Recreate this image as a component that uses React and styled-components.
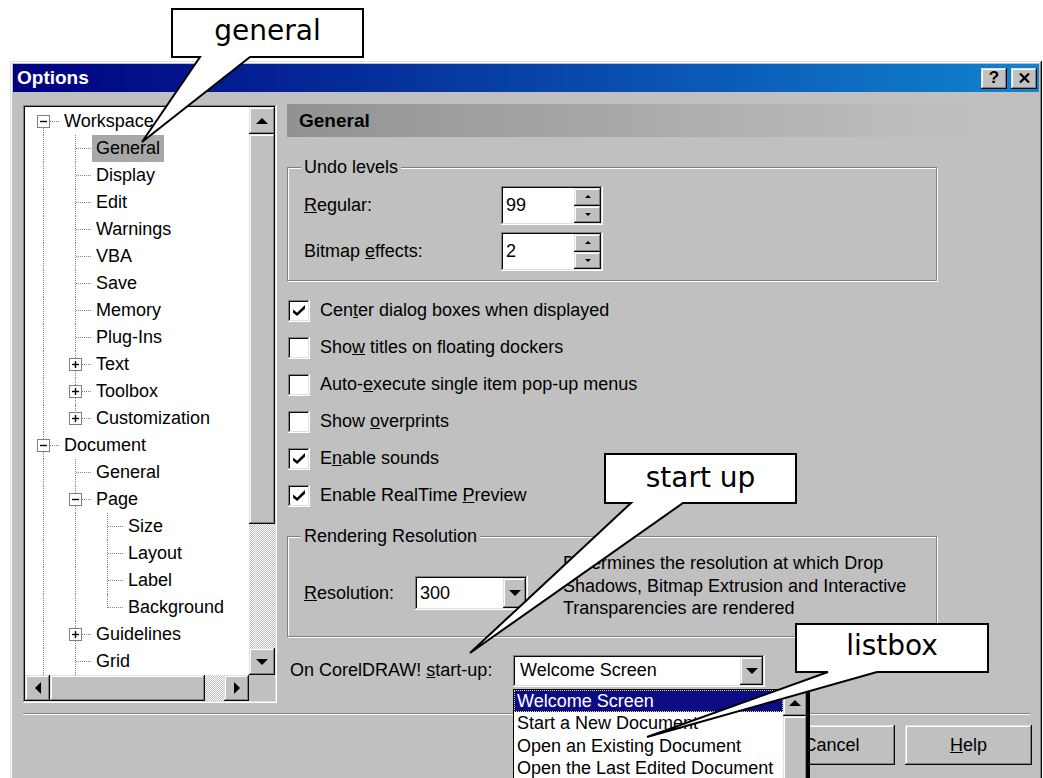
import React from 'react';
import styled, { createGlobalStyle, css } from 'styled-components';

const GlobalStyle = createGlobalStyle`
  html, body { margin: 0; padding: 0; background: #fff; overflow: hidden; }
  body { font-family: "Liberation Sans", Arial, sans-serif; }
`;

const raised = css`
  background: #c0c0c0;
  box-shadow: inset -1px -1px #0a0a0a, inset 1px 1px #dfdfdf,
    inset -2px -2px #808080, inset 2px 2px #fff;
`;

const sunken = css`
  box-shadow: inset -1px -1px #fff, inset 1px 1px #808080,
    inset -2px -2px #dfdfdf, inset 2px 2px #0a0a0a;
`;

const dither = css`
  background-color: #fff;
  background-image: repeating-conic-gradient(#c0c0c0 0 25%, #fff 0 50%);
  background-size: 2px 2px;
`;

const Page = styled.div`
  position: relative;
  width: 1043px;
  height: 778px;
  overflow: hidden;
  background: #fff;
  box-sizing: border-box;
  padding: 61px 0 0 10px;
  font-family: "Liberation Sans", Arial, sans-serif;
  font-size: 18px;
  color: #000;
`;

const Window = styled.div`
  width: 1032px;
  box-sizing: border-box;
  padding: 3px 3px 40px;
  ${raised};
`;

const TitleBar = styled.div`
  display: flex;
  align-items: center;
  height: 28px;
  padding: 0 2px 0 4px;
  background: linear-gradient(90deg, #000080, #1084d0);
  color: #fff;
`;

const TitleText = styled.span`
  font-weight: bold;
  font-size: 19px;
`;

const TitleButtons = styled.div`
  margin-left: auto;
  display: flex;
  gap: 4px;
`;

const TitleButton = styled.div`
  width: 26px;
  height: 21px;
  display: flex;
  align-items: center;
  justify-content: center;
  color: #000;
  font-weight: bold;
  font-size: 17px;
  ${raised};
`;

const Body = styled.div`
  display: grid;
  grid-template-columns: 254px 736px;
  column-gap: 10px;
  align-items: start;
  padding: 13px 0 0 10px;
`;

/* ---------- tree view ---------- */

const TreeBox = styled.div`
  height: 598px;
  box-sizing: border-box;
  padding: 2px;
  background: #fff;
  ${sunken};
  display: grid;
  grid-template-columns: 1fr 26px;
  grid-template-rows: 1fr 26px;
`;

const TreeViewport = styled.div`
  overflow: hidden;
  background: #fff;
  padding: 1px 0 0 2px;
`;

const TreeRow = styled.div`
  display: flex;
  height: 27px;
  white-space: nowrap;
`;

const Guide = styled.div`
  position: relative;
  flex: none;
  width: 32px;
  &::before {
    content: '';
    display: ${(p) => (p.$line ? 'block' : 'none')};
    position: absolute;
    left: 16px;
    top: 0;
    bottom: 0;
    border-left: 1px dotted #808080;
  }
`;

const Joint = styled.div`
  position: relative;
  flex: none;
  width: 32px;
  &::before {
    content: '';
    position: absolute;
    left: 16px;
    top: ${(p) => (p.$first ? '50%' : '0')};
    bottom: ${(p) => (p.$last ? '50%' : '0')};
    border-left: 1px dotted #808080;
  }
  &::after {
    content: '';
    position: absolute;
    left: 17px;
    right: 0;
    top: 13px;
    border-top: 1px dotted #808080;
  }
`;

const ExpanderBox = styled.svg`
  position: absolute;
  left: 10px;
  top: 7px;
  z-index: 1;
`;

const NodeLabel = styled.span`
  margin-left: 1px;
  padding: 0 4px;
  line-height: 27px;
  height: 27px;
  background: ${(p) => (p.$selected ? '#a8a8a8' : 'transparent')};
`;

const ScrollColumn = styled.div`
  display: flex;
  flex-direction: column;
  ${dither};
`;

const ScrollLine = styled.div`
  display: flex;
  ${dither};
`;

const ScrollButton = styled.div`
  flex: none;
  width: ${(p) => p.$w || 'auto'};
  height: ${(p) => p.$h || 'auto'};
  display: flex;
  align-items: center;
  justify-content: center;
  ${raised};
`;

const ScrollThumb = styled.div`
  flex: none;
  ${(p) => (p.$vertical ? `height: ${p.$size}px;` : `width: ${p.$size}px;`)}
  ${raised};
`;

const ScrollTrack = styled.div`
  flex: 1;
`;

const ScrollCorner = styled.div`
  background: #c0c0c0;
`;

const Triangle = styled.span`
  width: 0;
  height: 0;
  border: ${(p) => p.$s}px solid transparent;
  ${(p) =>
    p.$dir === 'up' &&
    css`
      border-top-width: 0;
      border-bottom-color: #000;
    `}
  ${(p) =>
    p.$dir === 'down' &&
    css`
      border-bottom-width: 0;
      border-top-color: #000;
    `}
  ${(p) =>
    p.$dir === 'left' &&
    css`
      border-left-width: 0;
      border-right-color: #000;
    `}
  ${(p) =>
    p.$dir === 'right' &&
    css`
      border-right-width: 0;
      border-left-color: #000;
    `}
`;

/* ---------- right panel ---------- */

const Panel = styled.div`
  display: flex;
  flex-direction: column;
  margin-top: -1px;
`;

const PanelHeader = styled.div`
  height: 33px;
  display: flex;
  align-items: center;
  padding-left: 12px;
  font-weight: bold;
  font-size: 19px;
  background: linear-gradient(90deg, #929292, #bdbdbd 85%, #c0c0c0);
`;

const Group = styled.fieldset`
  width: 650px;
  min-width: 0;
  box-sizing: border-box;
  margin: ${(p) => p.$mt}px 0 0;
  padding: ${(p) => p.$pt}px 16px ${(p) => p.$pb}px;
  border: 1px solid #808080;
  box-shadow: 1px 1px 0 #fff, inset 1px 1px 0 #fff;
`;

const Legend = styled.legend`
  margin-left: -3px;
  padding: 0 3px;
  line-height: 21px;
  background: #c0c0c0;
`;

const UndoGrid = styled.div`
  display: grid;
  grid-template-columns: 197px 102px;
  row-gap: 7px;
  align-items: center;
`;

const Key = styled.span`
  text-decoration: underline;
`;

const SpinField = styled.div`
  width: 102px;
  height: 39px;
  box-sizing: border-box;
  padding: 2px;
  display: flex;
  background: #fff;
  ${sunken};
`;

const FieldValue = styled.span`
  flex: 1;
  display: flex;
  align-items: center;
  padding-left: ${(p) => p.$pad || 3}px;
`;

const SpinButtons = styled.div`
  width: 27px;
  display: flex;
  flex-direction: column;
`;

const SpinButton = styled.div`
  flex: 1;
  display: flex;
  align-items: center;
  justify-content: center;
  ${raised};
`;

const CheckList = styled.div`
  display: flex;
  flex-direction: column;
  margin-top: 11px;
`;

const CheckRow = styled.label`
  display: flex;
  align-items: center;
  gap: 10px;
  height: 37px;
  padding-left: 1px;
`;

const CheckBox = styled.span`
  width: 22px;
  height: 22px;
  flex: none;
  display: flex;
  align-items: center;
  justify-content: center;
  background: #fff;
  ${sunken};
`;

const RenderRow = styled.div`
  display: flex;
  align-items: flex-start;
`;

const FieldLabel = styled.span`
  flex: none;
  width: ${(p) => p.$w}px;
  height: ${(p) => p.$h}px;
  margin-top: ${(p) => p.$mt || 0}px;
  display: flex;
  align-items: center;
  white-space: pre;
`;

const Combo = styled.div`
  flex: none;
  width: ${(p) => p.$w}px;
  height: ${(p) => p.$h}px;
  margin-top: ${(p) => p.$mt || 0}px;
  box-sizing: border-box;
  padding: 2px;
  display: flex;
  background: #fff;
  ${sunken};
`;

const DropButton = styled.div`
  width: 23px;
  display: flex;
  align-items: center;
  justify-content: center;
  ${raised};
`;

const Description = styled.p`
  margin: 0 0 0 35px;
  width: 365px;
  line-height: 22.5px;
`;

const StartupRow = styled.div`
  display: flex;
  align-items: center;
  margin-top: 18px;
  padding-left: 3px;
`;

const ComboAnchor = styled.div`
  position: relative;
`;

const DropList = styled.div`
  position: absolute;
  left: 0;
  top: calc(100% + 2px);
  z-index: 5;
  width: 297px;
  height: 96px;
  box-sizing: border-box;
  display: flex;
  background: #fff;
  border: 1px solid #000;
  border-right-width: 3px;
`;

const ListItems = styled.div`
  flex: 1;
  display: flex;
  flex-direction: column;
`;

const ListItem = styled.div`
  height: 22.5px;
  line-height: 22.5px;
  padding-left: 3px;
  white-space: nowrap;
  ${(p) =>
    p.$selected &&
    css`
      background: #0c0c84;
      color: #fff;
      outline: 1px dotted #e8d890;
      outline-offset: -1px;
    `}
`;

const ListScroll = styled.div`
  width: 24px;
  display: flex;
  flex-direction: column;
  ${dither};
`;

const Separator = styled.div`
  margin: 10px 9px 0 10px;
  border-top: 1px solid #808080;
  border-bottom: 1px solid #fff;
`;

const ButtonRow = styled.div`
  display: flex;
  justify-content: flex-end;
  gap: 10px;
  margin-top: 10px;
  padding-right: 7px;
`;

const PushButton = styled.div`
  width: 127px;
  height: 40px;
  display: flex;
  align-items: center;
  justify-content: center;
  ${raised};
`;

/* ---------- callouts ---------- */

const CalloutLayer = styled.svg`
  position: absolute;
  left: 0;
  top: 0;
  z-index: 10;
  pointer-events: none;
`;

const CalloutText = styled.div`
  position: absolute;
  z-index: 11;
  left: ${(p) => p.$x}px;
  top: ${(p) => p.$y}px;
  width: ${(p) => p.$w}px;
  height: ${(p) => p.$h}px;
  box-sizing: border-box;
  padding-top: ${(p) => p.$pt}px;
  text-align: center;
  font-family: "DejaVu Sans", Verdana, sans-serif;
  font-size: 28px;
  line-height: 28px;
  color: #000;
`;

/* ---------- data ---------- */

// `more` marks a list that continues past the rows shown in the view
const leaf = (label, extra = {}) => ({ label, ...extra });
const closed = (label) => ({ label, children: [leaf('')], open: false });

const TREE = {
  more: true,
  items: [
    {
      label: 'Workspace',
      open: true,
      children: [
        leaf('General', { selected: true }),
        leaf('Display'),
        leaf('Edit'),
        leaf('Warnings'),
        leaf('VBA'),
        leaf('Save'),
        leaf('Memory'),
        leaf('Plug-Ins'),
        closed('Text'),
        closed('Toolbox'),
        closed('Customization'),
      ],
    },
    {
      label: 'Document',
      open: true,
      more: true,
      children: [
        leaf('General'),
        {
          label: 'Page',
          open: true,
          children: [leaf('Size'), leaf('Layout'), leaf('Label'), leaf('Background')],
        },
        closed('Guidelines'),
        leaf('Grid'),
      ],
    },
  ],
};

function flatten(nodes, more, depth = 0, guides = [], out = []) {
  nodes.forEach((node, i) => {
    const last = i === nodes.length - 1 && !more;
    out.push({ node, depth, guides, last, first: depth === 0 && i === 0 });
    if (node.open && node.children) {
      flatten(node.children, node.more, depth + 1, [...guides, !last], out);
    }
  });
  return out;
}

const CHECKS = [
  { on: true, text: <>Cen<Key>t</Key>er dialog boxes when displayed</> },
  { on: false, text: <>Sho<Key>w</Key> titles on floating dockers</> },
  { on: false, text: <>Auto-<Key>e</Key>xecute single item pop-up menus</> },
  { on: false, text: <>Show <Key>o</Key>verprints</> },
  { on: true, text: <>E<Key>n</Key>able sounds</> },
  { on: true, text: <>Enable RealTime <Key>P</Key>review</> },
];

const STARTUP_OPTIONS = [
  'Welcome Screen',
  'Start a New Document',
  'Open an Existing Document',
  'Open the Last Edited Document',
];

function Expander({ open }) {
  return (
    <ExpanderBox width="13" height="13" viewBox="0 0 13 13">
      <rect x="0.5" y="0.5" width="12" height="12" fill="#fff" stroke="#808080" />
      <line x1="3" y1="6.5" x2="10" y2="6.5" stroke="#000" strokeWidth="1.4" />
      {!open && <line x1="6.5" y1="3" x2="6.5" y2="10" stroke="#000" strokeWidth="1.4" />}
    </ExpanderBox>
  );
}

function CheckMark() {
  return (
    <svg width="12" height="11" viewBox="0 0 7 6.5">
      <polygon points="0,2.6 2.4,4.6 7,0 7,2.2 2.4,6.5 0,4.6" fill="#000" />
    </svg>
  );
}

function Spinner({ value }) {
  return (
    <SpinField>
      <FieldValue>{value}</FieldValue>
      <SpinButtons>
        <SpinButton><Triangle $dir="up" $s={3} /></SpinButton>
        <SpinButton><Triangle $dir="down" $s={3} /></SpinButton>
      </SpinButtons>
    </SpinField>
  );
}

const CALLOUTS = [
  { text: 'general', x: 172, y: 9, w: 191, h: 48, pt: 8, points: '172,9 363,9 363,57 250,57 142,142 200,57 172,57' },
  { text: 'start up', x: 605, y: 454, w: 191, h: 49, pt: 10, points: '605,454 796,454 796,503 683,503 470,653 631,503 605,503' },
  { text: 'listbox', x: 796, y: 624, w: 192, h: 48, pt: 8, points: '796,624 988,624 988,672 877,672 647,737 828,672 796,672' },
];

export default function App() {
  const rows = flatten(TREE.items, TREE.more);
  return (
    <>
      <GlobalStyle />
      <Page>
        <Window>
          <TitleBar>
            <TitleText>Options</TitleText>
            <TitleButtons>
              <TitleButton>?</TitleButton>
              <TitleButton>
                <svg width="11" height="10" viewBox="0 0 11 10">
                  <path d="M1 0.5 L10 9.5 M10 0.5 L1 9.5" stroke="#000" strokeWidth="2.2" />
                </svg>
              </TitleButton>
            </TitleButtons>
          </TitleBar>

          <Body>
            <TreeBox>
              <TreeViewport>
                {rows.map((r, i) => (
                  <TreeRow key={i}>
                    {r.guides.map((g, j) => (
                      <Guide key={j} $line={g} />
                    ))}
                    <Joint $last={r.last} $first={r.first}>
                      {r.node.children && <Expander open={r.node.open} />}
                    </Joint>
                    <NodeLabel $selected={r.node.selected}>{r.node.label}</NodeLabel>
                  </TreeRow>
                ))}
              </TreeViewport>
              <ScrollColumn>
                <ScrollButton $h="27px"><Triangle $dir="up" $s={6} /></ScrollButton>
                <ScrollThumb $vertical $size={390} />
                <ScrollTrack />
                <ScrollButton $h="27px"><Triangle $dir="down" $s={6} /></ScrollButton>
              </ScrollColumn>
              <ScrollLine>
                <ScrollButton $w="25px"><Triangle $dir="left" $s={6} /></ScrollButton>
                <ScrollThumb $size={155} />
                <ScrollTrack />
                <ScrollButton $w="25px"><Triangle $dir="right" $s={6} /></ScrollButton>
              </ScrollLine>
              <ScrollCorner />
            </TreeBox>

            <Panel>
              <PanelHeader>General</PanelHeader>

              <Group $mt={20} $pt={8} $pb={9}>
                <Legend>Undo levels</Legend>
                <UndoGrid>
                  <span><Key>R</Key>egular:</span>
                  <Spinner value="99" />
                  <span>Bitmap <Key>e</Key>ffects:</span>
                  <Spinner value="2" />
                </UndoGrid>
              </Group>

              <CheckList>
                {CHECKS.map((c, i) => (
                  <CheckRow key={i}>
                    <CheckBox>{c.on && <CheckMark />}</CheckBox>
                    <span>{c.text}</span>
                  </CheckRow>
                ))}
              </CheckList>

              <Group $mt={12} $pt={5} $pb={16}>
                <Legend>Rendering Resolution</Legend>
                <RenderRow>
                  <FieldLabel $w={111} $h={34} $mt={24}>
                    <span><Key>R</Key>esolution:</span>
                  </FieldLabel>
                  <Combo $w={113} $h={34} $mt={24}>
                    <FieldValue $pad={3}>300</FieldValue>
                    <DropButton><Triangle $dir="down" $s={6} /></DropButton>
                  </Combo>
                  <Description>
                    Determines the resolution at which Drop Shadows, Bitmap Extrusion and
                    Interactive Transparencies are rendered
                  </Description>
                </RenderRow>
              </Group>

              <StartupRow>
                <FieldLabel $w={223} $h={32}>
                  <span>On CorelDRAW! <Key>s</Key>tart-up:</span>
                </FieldLabel>
                <ComboAnchor>
                  <Combo $w={252} $h={32}>
                    <FieldValue $pad={5}>Welcome Screen</FieldValue>
                    <DropButton><Triangle $dir="down" $s={6} /></DropButton>
                  </Combo>
                  <DropList>
                    <ListItems>
                      {STARTUP_OPTIONS.map((o, i) => (
                        <ListItem key={o} $selected={i === 0}>{o}</ListItem>
                      ))}
                    </ListItems>
                    <ListScroll>
                      <ScrollButton $h="26px"><Triangle $dir="up" $s={6} /></ScrollButton>
                      <ScrollThumb $vertical $size={64} />
                    </ListScroll>
                  </DropList>
                </ComboAnchor>
              </StartupRow>
            </Panel>
          </Body>

          <Separator />
          <ButtonRow>
            <PushButton>OK</PushButton>
            <PushButton>Cancel</PushButton>
            <PushButton><span><Key>H</Key>elp</span></PushButton>
          </ButtonRow>
        </Window>

        <CalloutLayer width="1043" height="778" viewBox="0 0 1043 778">
          {CALLOUTS.map((c) => (
            <polygon
              key={c.text}
              points={c.points}
              fill="#fff"
              stroke="#000"
              strokeWidth="2"
              strokeLinejoin="miter"
            />
          ))}
        </CalloutLayer>
        {CALLOUTS.map((c) => (
          <CalloutText key={c.text} $x={c.x} $y={c.y} $w={c.w} $h={c.h} $pt={c.pt}>
            {c.text}
          </CalloutText>
        ))}
      </Page>
    </>
  );
}
